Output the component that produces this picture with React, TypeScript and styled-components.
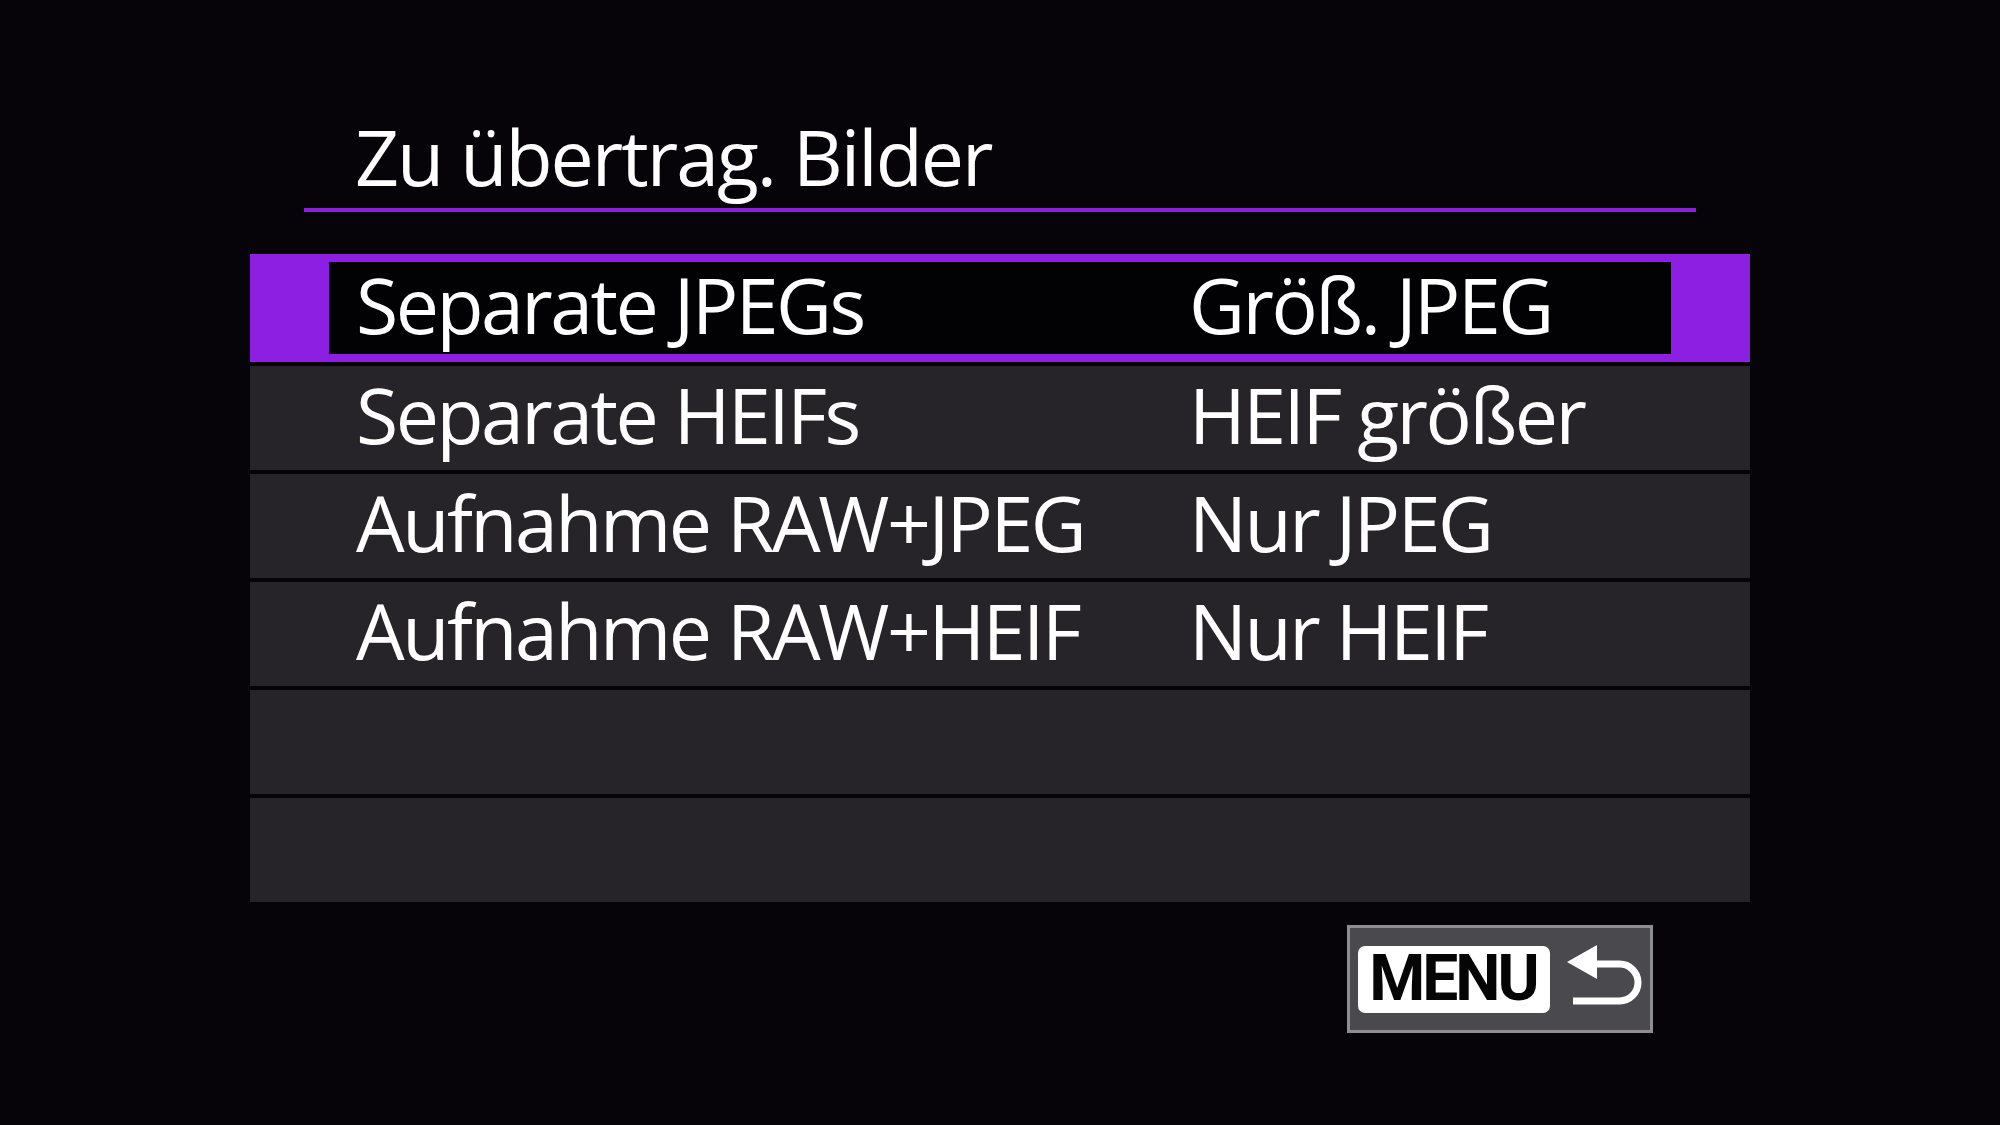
import React from "react";
import styled, { createGlobalStyle } from "styled-components";

const Global = createGlobalStyle`
  html, body { margin: 0; padding: 0; background: #060408; }
  body { font-family: "Open Sans", "Noto Sans", sans-serif; }
`;

const Screen = styled.div`
  width: 2000px;
  height: 1125px;
  background: #060408;
  display: flex;
  flex-direction: column;
  color: #ffffff;
  overflow: hidden;
`;

const Header = styled.div`
  margin-left: 304px;
  width: 1392px;
  padding: 117px 0 11px 51px;
  box-sizing: border-box;
  border-bottom: 4px solid #8a20de;
`;

const Title = styled.h1`
  margin: 0;
  font-family: "Open Sans", "Noto Sans", sans-serif;
  font-weight: 400;
  font-size: 77px;
  line-height: 80px;
  letter-spacing: -2px;
  color: #ffffff;
`;

const List = styled.div`
  margin: 42px 0 0 250px;
  width: 1500px;
  display: flex;
  flex-direction: column;
  gap: 4px;
`;

const Row = styled.div`
  height: 104px;
  box-sizing: border-box;
  background: #262428;
  display: flex;
  align-items: center;
  padding: 0 0 6px 106px;
`;

const SelectedRow = styled.div`
  height: 108px;
  box-sizing: border-box;
  background: #8c1fe2;
  padding: 8px 79px;
  display: flex;
`;

const SelectedInner = styled.div`
  flex: 1;
  background: #020104;
  display: flex;
  align-items: center;
  padding: 0 0 6px 27px;
`;

const Cells = styled.div`
  display: grid;
  grid-template-columns: 833px 1fr;
  font-family: "Open Sans", "Noto Sans", sans-serif;
  font-size: 77px;
  line-height: 80px;
  letter-spacing: -2.5px;
  color: #ffffff;
  white-space: nowrap;
`;

const Footer = styled.div`
  margin: 23px 0 0 1347px;
  display: flex;
`;

const MenuButton = styled.div`
  width: 306px;
  height: 108px;
  box-sizing: border-box;
  border: 3px solid #8e8d91;
  background: #4a494d;
  display: flex;
  align-items: center;
  padding: 0 0 0 8px;
  gap: 17px;
`;

const MenuLabel = styled.div`
  width: 192px;
  height: 67px;
  border-radius: 7px;
  background: #ffffff;
  color: #050505;
  display: flex;
  align-items: center;
  justify-content: center;
  font-family: Roboto, "Liberation Sans", sans-serif;
  font-weight: 700;
  font-size: 64px;
  letter-spacing: -3px;
  line-height: 1;
  padding-right: 2px;
  box-sizing: border-box;
`;

const ReturnIcon = () => (
  <svg width="76" height="64" viewBox="0 0 76 64" style={{ marginTop: "-6px" }}>
    <polygon points="0,18 30,1 30,35" fill="#ffffff" />
    <path
      d="M28 20 H52.5 A18.5 18.5 0 0 1 52.5 57 H6"
      fill="none"
      stroke="#ffffff"
      strokeWidth="7"
    />
  </svg>
);

const rows: [string, string][] = [
  ["Separate HEIFs", "HEIF größer"],
  ["Aufnahme RAW+JPEG", "Nur JPEG"],
  ["Aufnahme RAW+HEIF", "Nur HEIF"],
  ["", ""],
  ["", ""],
];

export default function App() {
  return (
    <Screen>
      <Global />
      <Header>
        <Title>Zu übertrag. Bilder</Title>
      </Header>
      <List>
        <SelectedRow>
          <SelectedInner>
            <Cells>
              <span>Separate JPEGs</span>
              <span>Größ. JPEG</span>
            </Cells>
          </SelectedInner>
        </SelectedRow>
        {rows.map(([a, b], i) => (
          <Row key={i}>
            <Cells>
              <span>{a}</span>
              <span>{b}</span>
            </Cells>
          </Row>
        ))}
      </List>
      <Footer>
        <MenuButton>
          <MenuLabel>MENU</MenuLabel>
          <ReturnIcon />
        </MenuButton>
      </Footer>
    </Screen>
  );
}
